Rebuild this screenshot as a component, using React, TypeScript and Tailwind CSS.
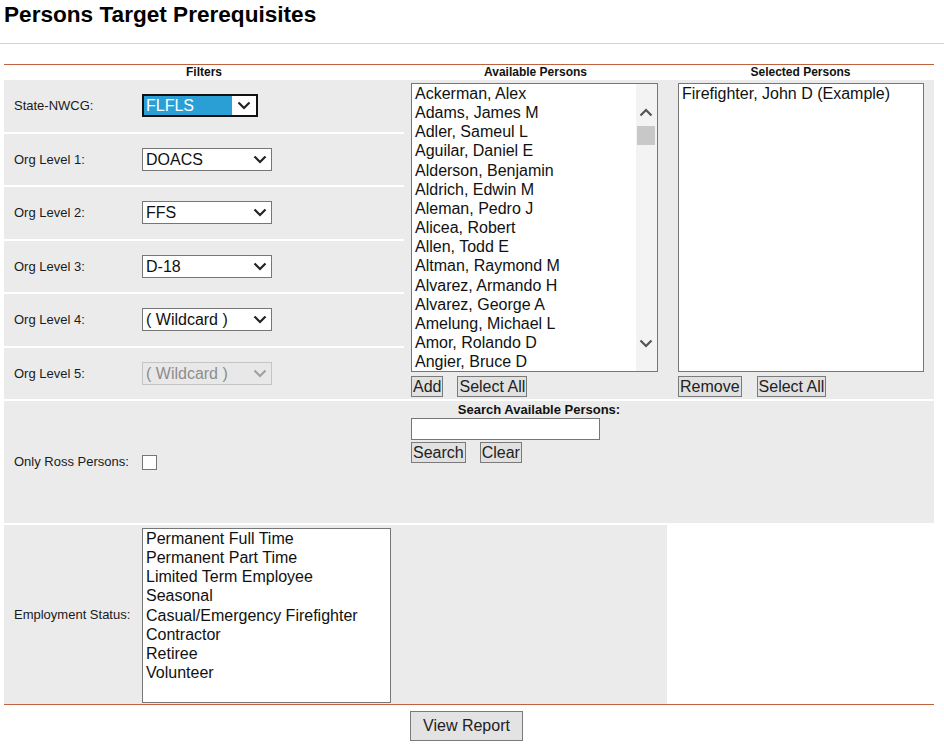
import React from "react";

const people = [
  "Ackerman, Alex",
  "Adams, James M",
  "Adler, Sameul L",
  "Aguilar, Daniel E",
  "Alderson, Benjamin",
  "Aldrich, Edwin M",
  "Aleman, Pedro J",
  "Alicea, Robert",
  "Allen, Todd E",
  "Altman, Raymond M",
  "Alvarez, Armando H",
  "Alvarez, George A",
  "Amelung, Michael L",
  "Amor, Rolando D",
  "Angier, Bruce D",
];

const statuses = [
  "Permanent Full Time",
  "Permanent Part Time",
  "Limited Term Employee",
  "Seasonal",
  "Casual/Emergency Firefighter",
  "Contractor",
  "Retiree",
  "Volunteer",
];

function Chevron({ color, dir = "down" }: { color: string; dir?: "up" | "down" }) {
  return (
    <svg width="14" height="9" viewBox="0 0 14 9">
      <path
        d={dir === "down" ? "M1.5 1.5 L7 7 L12.5 1.5" : "M1.5 7.5 L7 2 L12.5 7.5"}
        fill="none"
        stroke={color}
        strokeWidth="2.2"
      />
    </svg>
  );
}

function FakeSelect({ value, kind }: { value: string; kind: "focus" | "normal" | "disabled" }) {
  if (kind === "focus") {
    return (
      <div className="flex h-[23px] w-[116px] items-center border-2 border-[#111] bg-white">
        <div className="flex h-[19px] w-[88px] items-center bg-[#2a9fd6] pl-[2px] text-[16px] leading-[19px] text-white">
          {value}
        </div>
        <div className="flex flex-1 items-center justify-center">
          <Chevron color="#222" />
        </div>
      </div>
    );
  }
  const disabled = kind === "disabled";
  return (
    <div
      className={
        disabled
          ? "flex h-[23px] w-[130px] items-center border border-[#c4c4c4] bg-[#e8e8e8] pl-[3px] pr-[4px]"
          : "flex h-[23px] w-[130px] items-center border border-[#767676] bg-white pl-[3px] pr-[4px]"
      }
    >
      <span className={disabled ? "flex-1 text-[16px] leading-[19px] text-[#8d8d8d]" : "flex-1 text-[16px] leading-[19px] text-[#111]"}>
        {value}
      </span>
      <Chevron color={disabled ? "#a0a0a0" : "#222"} />
    </div>
  );
}

function Btn({ children }: { children: React.ReactNode }) {
  return (
    <button className="h-[21px] border border-[#7a7a7a] bg-[#e1e1e1] px-[1px] text-[16px] leading-[18px] text-[#222]">
      {children}
    </button>
  );
}

const filterRows: { label: string; value: string; kind: "focus" | "normal" | "disabled" }[] = [
  { label: "State-NWCG:", value: "FLFLS", kind: "focus" },
  { label: "Org Level 1:", value: "DOACS", kind: "normal" },
  { label: "Org Level 2:", value: "FFS", kind: "normal" },
  { label: "Org Level 3:", value: "D-18", kind: "normal" },
  { label: "Org Level 4:", value: "( Wildcard )", kind: "normal" },
  { label: "Org Level 5:", value: "( Wildcard )", kind: "disabled" },
];

export default function App() {
  return (
    <div className="min-h-[754px] w-[944px] bg-white font-['Liberation_Sans',Arial,sans-serif] text-black">
      <h1 className="h-[43px] pl-[4px] pt-[2px] text-[22.6px] font-bold leading-[26px]">
        Persons Target Prerequisites
      </h1>
      <div className="h-px bg-[#d2d2d2]" />

      <div className="ml-[4px] mt-[20px] w-[930px]">
        <div className="h-px bg-[#c0623f]" />

        {/* header */}
        <div className="grid h-[15px] grid-cols-[400px_263px_267px] text-[12px] font-bold leading-[15px] text-[#111]">
          <div className="text-center">Filters</div>
          <div className="text-center">Available Persons</div>
          <div className="text-center">Selected Persons</div>
        </div>

        {/* body */}
        <div className="grid grid-cols-[400px_263px_267px] grid-rows-[319px_122px_179px] gap-y-[2px]">
          {/* filters */}
          <div className="flex flex-col gap-[2px]">
            {filterRows.map((r) => (
              <div key={r.label} className="flex flex-1 items-center bg-[#ebebeb]">
                <div className="w-[138px] pl-[10px] text-[13px] text-[#1a1a1a]">{r.label}</div>
                <FakeSelect value={r.value} kind={r.kind} />
              </div>
            ))}
          </div>

          {/* available persons */}
          <div className="bg-[#ebebeb] pl-[7px] pt-[3px]">
            <div className="relative h-[289px] w-[247px] overflow-hidden border border-[#767676] bg-white">
              {people.map((p) => (
                <div key={p} className="pl-[3px] text-[16px] leading-[19.15px] text-[#111]">
                  {p}
                </div>
              ))}
              <div className="absolute bottom-0 right-0 top-0 w-[21px] bg-[#f3f3f3]">
                <div className="absolute left-[3px] top-[24px]">
                  <Chevron color="#555" dir="up" />
                </div>
                <div className="absolute left-[1px] top-[42px] h-[19px] w-[18px] bg-[#c8c8c8]" />
                <div className="absolute left-[3px] top-[255px]">
                  <Chevron color="#555" />
                </div>
              </div>
            </div>
            <div className="mt-[4px] flex gap-[14px]">
              <Btn>Add</Btn>
              <Btn>Select All</Btn>
            </div>
          </div>

          {/* selected persons */}
          <div className="bg-[#ebebeb] pl-[11px] pt-[3px]">
            <div className="h-[289px] w-[246px] border border-[#767676] bg-white">
              <div className="pl-[3px] text-[16px] leading-[19.15px] text-[#111]">
                Firefighter, John D (Example)
              </div>
            </div>
            <div className="mt-[4px] flex gap-[15px]">
              <Btn>Remove</Btn>
              <Btn>Select All</Btn>
            </div>
          </div>

          {/* only ross */}
          <div className="flex items-center bg-[#ebebeb]">
            <div className="w-[138px] pl-[10px] text-[13px] text-[#1a1a1a]">Only Ross Persons:</div>
            <div className="h-[15px] w-[15px] border border-[#767676] bg-white" />
          </div>

          {/* search */}
          <div className="bg-[#ebebeb] pl-[7px] pt-[1px]">
            <div className="text-center text-[13px] font-bold leading-[15px] text-[#111]">
              Search Available Persons:
            </div>
            <div className="mt-[1px] h-[22px] w-[189px] border border-[#767676] bg-white" />
            <div className="mt-[2px] flex gap-[14px]">
              <Btn>Search</Btn>
              <Btn>Clear</Btn>
            </div>
          </div>

          <div className="bg-[#ebebeb]" />

          {/* employment status */}
          <div className="flex bg-[#ebebeb]">
            <div className="flex w-[138px] items-center pl-[10px] text-[13px] text-[#1a1a1a]">
              Employment Status:
            </div>
            <div className="mt-[3px] h-[175px] w-[249px] border border-[#767676] bg-white">
              {statuses.map((s) => (
                <div key={s} className="pl-[3px] text-[16px] leading-[19.15px] text-[#111]">
                  {s}
                </div>
              ))}
            </div>
          </div>
          <div className="bg-[#ebebeb]" />
          <div className="bg-white" />
        </div>

        <div className="h-px bg-[#c0623f]" />

        <div className="flex justify-center pr-[5px] pt-[6px]">
          <button className="h-[30px] border border-[#7a7a7a] bg-[#e3e3e3] px-[12px] text-[16px] leading-[20px] text-[#222]">
            View Report
          </button>
        </div>
      </div>
    </div>
  );
}
